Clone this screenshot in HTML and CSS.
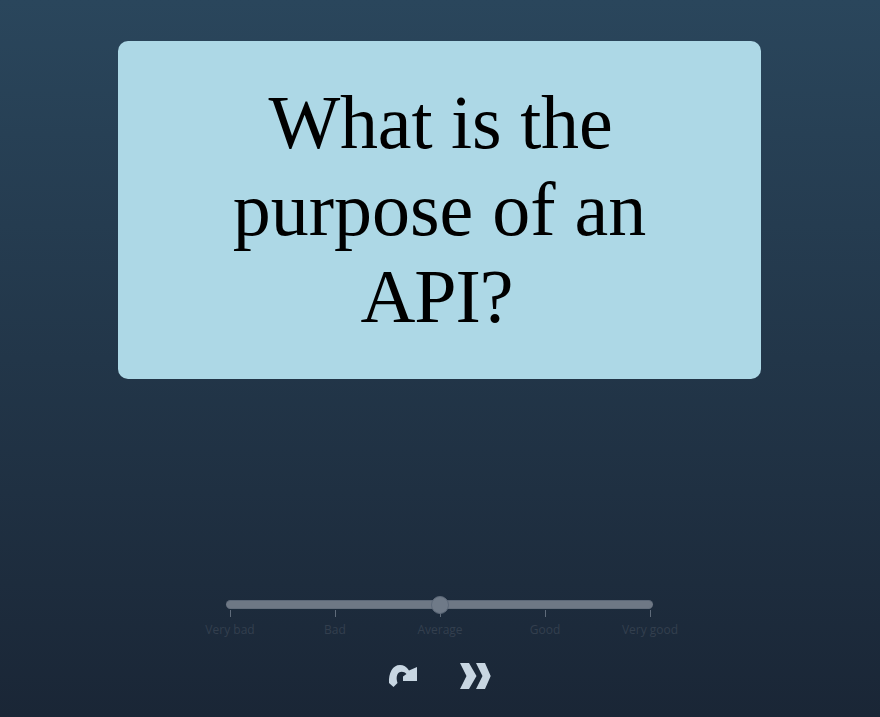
FILE: index.html
```html
<!DOCTYPE html>
<html lang="en">
<head>
    <meta charset="UTF-8">
    <title>Flashcards</title>
    <link rel="stylesheet" href="styles.css">
</head>
<body>
    <div class="card"><span class="line-one">What is the</span> purpose of an <span class="line-three">API?</span></div>
    <div class="rating">
        <div class="track"><span class="thumb"></span></div>
        <div class="scale">
            <div class="step"><span class="tick"></span>Very bad</div>
            <div class="step"><span class="tick"></span>Bad</div>
            <div class="step"><span class="tick"></span>Average</div>
            <div class="step"><span class="tick"></span>Good</div>
            <div class="step"><span class="tick"></span>Very good</div>
        </div>
    </div>
    <div class="actions">
        <svg class="icon" width="30" height="26" viewBox="0 0 30 26"><path d="M29 4 L29 18 L15 18 L15 13.500 L18.500 11 C16.500 8.500 13 8 11 9.500 C8.500 11.500 8 15.500 9.500 20 L5.500 24 L1 20 C0.500 10 4.500 2 12 2 C15.500 2 18.500 3.500 21 7.500 Z" /></svg>
        <svg class="icon" width="34" height="28" viewBox="0 0 34 28"><path d="M2 1 H11 L18.500 14 L11 27 H2 L8.500 14 Z M18 1 H27 L32.700 14 L27 27 H18 L24.500 14 Z" /></svg>
    </div>
</body>
</html>
```

FILE: styles.css
```css
html, body { height: 100%; }
body {
    margin: 0;
    background: linear-gradient(180deg, #2a465c 0%, #1a2636 100%);
    display: flex;
    flex-direction: column;
    align-items: center;
    overflow: hidden;
    box-sizing: border-box;
    padding-top: 41px;
}
.card {
    width: 643px;
    height: 338px;
    box-sizing: border-box;
    padding: 38px 90px;
    margin-left: -1px;
    background: #add8e6;
    border-radius: 10px;
    color: #000;
    font-family: "Liberation Serif", serif;
    font-size: 76px;
    text-align: center;
}
.line-one { letter-spacing: -0.2px; margin-left: 2px; }
.line-three { letter-spacing: -1px; margin-right: 6px; }
.rating {
    margin-top: 221px;
    margin-left: -2px;
    width: 525px;
    display: flex;
    flex-direction: column;
    align-items: center;
}
.track {
    position: relative;
    width: 427px;
    height: 9px;
    border-radius: 5px;
    background: #6e7885;
    border-top: 1px solid #5c6878;
    border-bottom: 1px solid #636e7c;
    box-sizing: border-box;
}
.thumb {
    position: absolute;
    left: 205px;
    top: -5px;
    width: 18px;
    height: 18px;
    border-radius: 50%;
    background: #6f7a88;
    border: 1px solid #5c6878;
    box-sizing: border-box;
}
.scale { display: flex; width: 525px; margin-left: 2px; }
.step {
    flex: 1;
    display: flex;
    flex-direction: column;
    align-items: center;
    color: #333f4e;
    font-family: "Open Sans", sans-serif;
    font-size: 12px;
    line-height: 16px;
}
.tick {
    width: 1px;
    height: 7px;
    margin: 1px 0 5px;
    background: #5f6b7a;
}
.actions {
    margin-top: 24px;
    display: flex;
    align-items: center;
    gap: 40px;
}
.icon { fill: #c8d6e2; display: block; }
```
